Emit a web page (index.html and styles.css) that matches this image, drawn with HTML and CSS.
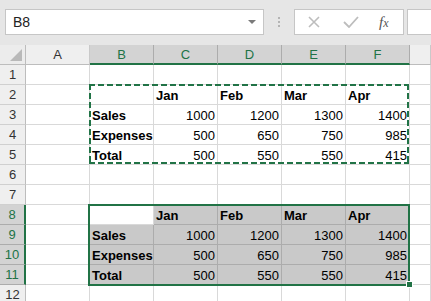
FILE: index.html
```html
<!DOCTYPE html>
<html>
  <head>
    <meta charset="UTF-8" />
    <title>Sheet</title>
    <link rel="stylesheet" href="styles.css">
  </head>
  <body>
    <div class="bar">
      <div class="namebox"><span>B8</span><i class="drop"></i></div>
      <div class="grip"><b></b><b></b><b></b></div>
      <div class="fxbox">
        <svg class="ico" width="14" height="12" viewBox="0 0 14 12"><path d="M2 1 L12 11 M12 1 L2 11" stroke="#bdbdbd" stroke-width="1.6" fill="none"/></svg>
        <svg class="ico" width="16" height="12" viewBox="0 0 16 12"><path d="M1 6 L6 11 L15 1" stroke="#bdbdbd" stroke-width="1.8" fill="none"/></svg>
        <span class="fx">f<sub>x</sub></span>
      </div>
      <div class="formula"></div>
    </div>

    <div class="sheet">
      <div class="corner"><i></i></div>
      <div class="ch">A</div>
      <div class="ch on">B</div>
      <div class="ch on">C</div>
      <div class="ch on">D</div>
      <div class="ch on">E</div>
      <div class="ch on">F</div>
      <div class="ch"></div>

      <div class="rh">1</div>
      <div class="c"></div><div class="c"></div><div class="c"></div><div class="c"></div><div class="c"></div><div class="c"></div><div class="c"></div>

      <div class="rh">2</div>
      <div class="c"></div><div class="c"></div><div class="c b">Jan</div><div class="c b">Feb</div><div class="c b">Mar</div><div class="c b">Apr</div><div class="c"></div>

      <div class="rh">3</div>
      <div class="c"></div><div class="c b">Sales</div><div class="c n">1000</div><div class="c n">1200</div><div class="c n">1300</div><div class="c n">1400</div><div class="c"></div>

      <div class="rh">4</div>
      <div class="c"></div><div class="c b">Expenses</div><div class="c n">500</div><div class="c n">650</div><div class="c n">750</div><div class="c n">985</div><div class="c"></div>

      <div class="rh">5</div>
      <div class="c"></div><div class="c b">Total</div><div class="c n">500</div><div class="c n">550</div><div class="c n">550</div><div class="c n">415</div><div class="c"></div>

      <div class="rh">6</div>
      <div class="c"></div><div class="c"></div><div class="c"></div><div class="c"></div><div class="c"></div><div class="c"></div><div class="c"></div>

      <div class="rh">7</div>
      <div class="c"></div><div class="c"></div><div class="c"></div><div class="c"></div><div class="c"></div><div class="c"></div><div class="c"></div>

      <div class="rh on">8</div>
      <div class="c"></div><div class="c"></div><div class="c g b">Jan</div><div class="c g b">Feb</div><div class="c g b">Mar</div><div class="c g b">Apr</div><div class="c"></div>

      <div class="rh on">9</div>
      <div class="c"></div><div class="c g b">Sales</div><div class="c g n">1000</div><div class="c g n">1200</div><div class="c g n">1300</div><div class="c g n">1400</div><div class="c"></div>

      <div class="rh on">10</div>
      <div class="c"></div><div class="c g b">Expenses</div><div class="c g n">500</div><div class="c g n">650</div><div class="c g n">750</div><div class="c g n">985</div><div class="c"></div>

      <div class="rh on">11</div>
      <div class="c"></div><div class="c g b">Total</div><div class="c g n">500</div><div class="c g n">550</div><div class="c g n">550</div><div class="c g n">415</div><div class="c"></div>

      <div class="rh">12</div>
      <div class="c"></div><div class="c"></div><div class="c"></div><div class="c"></div><div class="c"></div><div class="c"></div><div class="c"></div>

      <!-- copy marquee and current selection -->
      <div class="marquee"></div>
      <div class="sel"><i class="handle"></i></div>
    </div>
  </body>
</html>
```

FILE: styles.css
```css
*{margin: 0;padding: 0;box-sizing: border-box}
body{
  width: 431px;
  height: 301px;
  overflow: hidden;
  background: #e6e6e6;
  font-family: "Liberation Sans", Arial, sans-serif;
  font-size: 13px;
  color: #000;
}
.bar{
  height: 45px;
  display: flex;
  align-items: flex-start;
  padding-top: 9px;
}
.namebox{
  margin-left: 5px;
  width: 259px;
  height: 26px;
  background: #fff;
  border: 1px solid #c6c6c6;
  display: flex;
  align-items: center;
  justify-content: space-between;
  padding: 0 7px 0 7px;
  font-size: 14px;
  color: #222;
}
.drop{
  width: 0;
  height: 0;
  border-left: 4px solid transparent;
  border-right: 4px solid transparent;
  border-top: 4px solid #7a7a7a;
}
.grip{
  width: 30px;
  height: 26px;
  display: flex;
  flex-direction: column;
  align-items: center;
  justify-content: center;
  gap: 2px;
}
.grip b{
  display: block;
  width: 2px;
  height: 2px;
  background: #b4b4b4;
}
.fxbox{
  width: 110px;
  height: 26px;
  background: #fff;
  border: 1px solid #c6c6c6;
  display: flex;
  align-items: center;
  padding-left: 12px;
  gap: 22px;
}
.fx{
  font-family: "Liberation Serif", "Times New Roman", serif;
  font-style: italic;
  font-size: 15px;
  color: #555;
  margin-left: -2px;
}
.fx sub{
  font-size: 12px;
  vertical-align: 0;
}
.formula{
  flex: 1;
  margin-left: 3px;
  height: 26px;
  background: #fff;
  border: 1px solid #c6c6c6;
  border-right: none;
}

.sheet{
  position: relative;
  display: grid;
  grid-template-columns: 26px repeat(6, 64px) 1fr;
  grid-auto-rows: 20px;
  background: #fff;
}
.corner{
  background: #ececec;
  border-right: 1px solid #bdbdbd;
  border-bottom: 1px solid #bdbdbd;
  position: relative;
}
.corner i{
  position: absolute;
  right: 3px;
  bottom: 3px;
  width: 0;
  height: 0;
  border-left: 12px solid transparent;
  border-bottom: 12px solid #b9b9b9;
}
.ch{
  background: #efefef;
  border-right: 1px solid #c9c9c9;
  border-bottom: 1px solid #bdbdbd;
  text-align: center;
  line-height: 19px;
  color: #333;
  font-size: 13px;
}
.ch.on{
  background: #d3d3d3;
  color: #217346;
  border-right-color: #acacac;
  border-bottom: 2px solid #217346;
}
.rh{
  background: #efefef;
  border-right: 1px solid #bdbdbd;
  border-bottom: 1px solid #d0d0d0;
  text-align: center;
  line-height: 20px;
  color: #333;
  font-size: 13px;
}
.rh.on{
  background: #d3d3d3;
  color: #217346;
  border-right: 2px solid #217346;
  border-bottom-color: #acacac;
}
.c{
  border-right: 1px solid #d9d9d9;
  border-bottom: 1px solid #d9d9d9;
  padding: 3px 2px 0 2px;
  line-height: 15px;
  white-space: nowrap;
  overflow: hidden;
}
.b{
  font-weight: bold;
}
.n{
  text-align: right;
}
.g{
  background: #c9c9c9;
  border-right-color: #acacac;
  border-bottom-color: #acacac;
}
.marquee{
  position: absolute;
  grid-row: 3 / 7;
  grid-column: 3 / 8;
  top: -1px;
  left: -1px;
  right: 1px;
  bottom: 1px;
  background:
    repeating-linear-gradient(90deg, #217346 0 6px, transparent 6px 9px) top left / 100% 2px no-repeat,
    repeating-linear-gradient(90deg, #217346 0 6px, transparent 6px 9px) bottom left / 100% 2px no-repeat,
    repeating-linear-gradient(180deg, #217346 0 6px, transparent 6px 9px) top left / 2px 100% no-repeat,
    repeating-linear-gradient(180deg, #217346 0 6px, transparent 6px 9px) top right / 2px 100% no-repeat;
}
.sel{
  position: absolute;
  grid-row: 9 / 13;
  grid-column: 3 / 8;
  top: -1px;
  left: -2px;
  right: 0;
  bottom: -1px;
  border: 2px solid #217346;
}
.handle{
  position: absolute;
  right: -4px;
  bottom: -3px;
  width: 5px;
  height: 5px;
  background: #217346;
  box-shadow: 0 0 0 1px #fff;
}
```
